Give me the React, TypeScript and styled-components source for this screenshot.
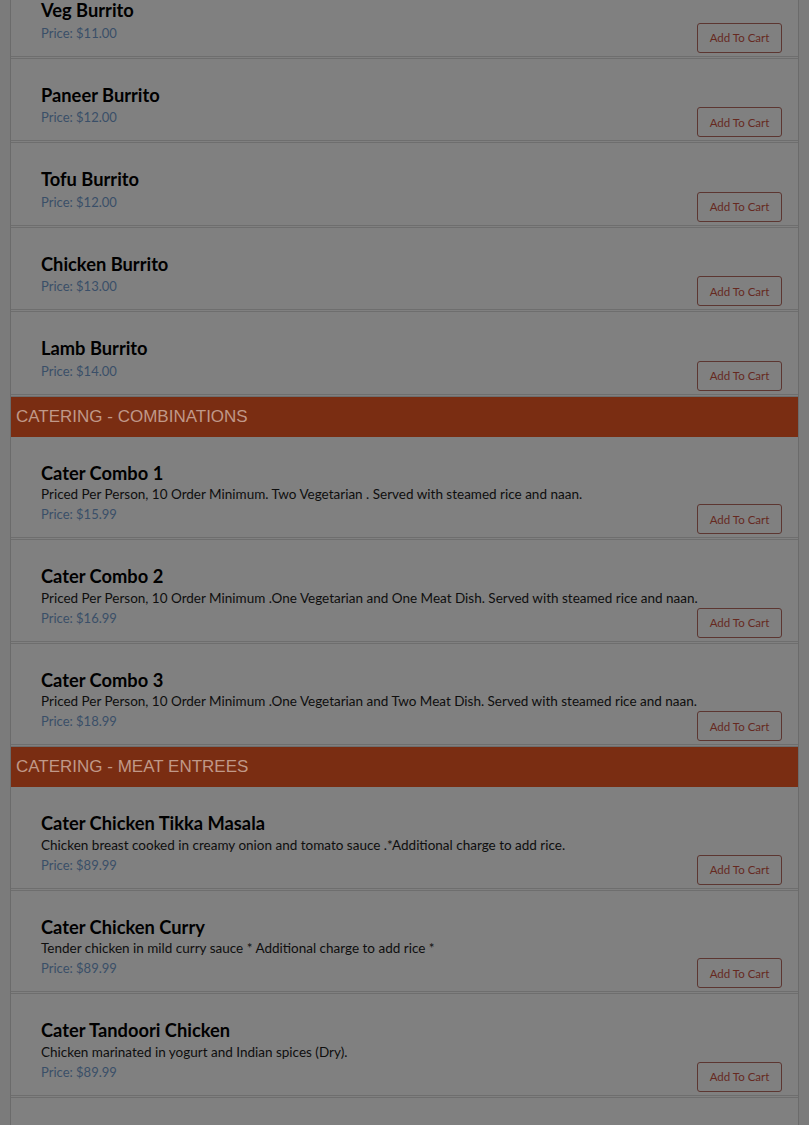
import React from 'react';
import styled, { createGlobalStyle } from 'styled-components';

const GlobalStyle = createGlobalStyle`
	html, body {
		margin: 0;
		padding: 0;
		background: #7b7b7b;
		overflow: hidden;
	}
	body {
		font-family: Lato, "Liberation Sans", sans-serif;
	}
`

const Page = styled.div`
	height: 1125px;
	overflow: hidden;
	padding: 0 10px;
`

const Panel = styled.div`
	margin-top: -25.75px;
	background: #808080;
	border-left: 1px solid #6b6b6b;
	border-right: 1px solid #6b6b6b;
`

const SectionHeader = styled.div`
	height: 40px;
	display: flex;
	align-items: center;
	padding-left: 5px;
	background: #7a2d12;
	color: #c09888;
	font-family: "Liberation Sans", Arial, sans-serif;
	font-size: 17px;
	text-transform: uppercase;
`

const Item = styled.div`
	display: flex;
	flex-direction: column;
	padding: 25px 16px 3px 30px;
	border-bottom: 3px double #6e6e6e;
`

const Title = styled.div`
	font-weight: bold;
	font-size: 18.3px;
	line-height: 23.5px;
	color: #000;
`

const Desc = styled.div`
	font-size: 13.5px;
	line-height: 19px;
	color: #0e0e0e;
`

const PriceRow = styled.div`
	display: flex;
	justify-content: space-between;
	align-items: flex-start;
`

const Price = styled.div`
	font-size: 13px;
	line-height: 20px;
	color: #3a4f68;
`

const CartButton = styled.button`
	width: 85px;
	height: 30px;
	padding: 0;
	background: transparent;
	border: 1px solid #5c3631;
	border-radius: 3px;
	color: #66291f;
	font-family: Lato, "Liberation Sans", sans-serif;
	font-size: 11.5px;
	cursor: pointer;
`

interface MenuItem {
	name: string;
	desc?: string;
	price: string;
}

interface Section {
	title?: string;
	items: MenuItem[];
}

const sections: Section[] = [
	{
		items: [
			{ name: 'Veg Burrito', price: '11.00' },
			{ name: 'Paneer Burrito', price: '12.00' },
			{ name: 'Tofu Burrito', price: '12.00' },
			{ name: 'Chicken Burrito', price: '13.00' },
			{ name: 'Lamb Burrito', price: '14.00' },
		],
	},
	{
		title: 'Catering - Combinations',
		items: [
			{ name: 'Cater Combo 1', desc: 'Priced Per Person, 10 Order Minimum. Two Vegetarian . Served with steamed rice and naan.', price: '15.99' },
			{ name: 'Cater Combo 2', desc: 'Priced Per Person, 10 Order Minimum .One Vegetarian and One Meat Dish. Served with steamed rice and naan.', price: '16.99' },
			{ name: 'Cater Combo 3', desc: 'Priced Per Person, 10 Order Minimum .One Vegetarian and Two Meat Dish. Served with steamed rice and naan.', price: '18.99' },
		],
	},
	{
		title: 'Catering - Meat Entrees',
		items: [
			{ name: 'Cater Chicken Tikka Masala', desc: 'Chicken breast cooked in creamy onion and tomato sauce .*Additional charge to add rice.', price: '89.99' },
			{ name: 'Cater Chicken Curry', desc: 'Tender chicken in mild curry sauce * Additional charge to add rice *', price: '89.99' },
			{ name: 'Cater Tandoori Chicken', desc: 'Chicken marinated in yogurt and Indian spices (Dry).', price: '89.99' },
			{ name: 'Cater Lamb Tikka Masala', desc: 'Lamb cooked in creamy onion and tomato sauce.', price: '99.99' },
		],
	},
]

export default function App() {
	return (
		<Page>
			<GlobalStyle />
			<Panel>
				{sections.map((section, i) => (
					<div key={i}>
						{section.title && <SectionHeader>{section.title}</SectionHeader>}
						{section.items.map((item) => (
							<Item key={item.name}>
								<Title>{item.name}</Title>
								{item.desc && <Desc>{item.desc}</Desc>}
								<PriceRow>
									<Price>Price: ${item.price}</Price>
									<CartButton>Add To Cart</CartButton>
								</PriceRow>
							</Item>
						))}
					</div>
				))}
			</Panel>
		</Page>
	)
}
